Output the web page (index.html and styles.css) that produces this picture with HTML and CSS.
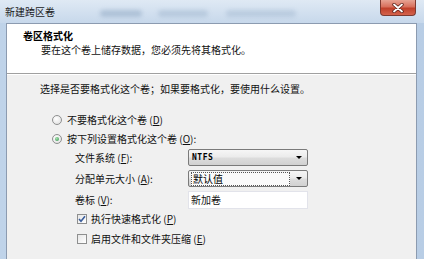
FILE: index.html
```html
<!DOCTYPE html>
<html>
<head>
<meta charset="utf-8">
<title>新建跨区卷</title>
<link rel="stylesheet" href="styles.css">
</head>
<body>
<div class="window">
	<div class="titlebar">
		<span class="title">新建跨区卷</span>
		<span class="blur b1"></span>
		<span class="blur b2"></span>
		<span class="blur b3"></span>
		<button class="close">
			<svg width="14" height="10" viewBox="0 0 14 10">
				<path d="M3 1.5 L11 8.5 M11 1.5 L3 8.5" stroke="#5a2018" stroke-width="3.4" stroke-linecap="round"/>
				<path d="M3 1.5 L11 8.5 M11 1.5 L3 8.5" stroke="#ffffff" stroke-width="1.8" stroke-linecap="round"/>
			</svg>
		</button>
	</div>
	<div class="frame">
		<div class="content">
			<div class="header">
				<div class="h-title">卷区格式化</div>
				<div class="h-sub">要在这个卷上储存数据，您必须先将其格式化。</div>
			</div>
			<div class="body">
				<p class="intro">选择是否要格式化这个卷；如果要格式化，要使用什么设置。</p>

				<div class="option"><span class="radio"></span>不要格式化这个卷 (<u>D</u>)</div>
				<div class="option"><span class="radio on"></span>按下列设置格式化这个卷 (<u>O</u>):</div>

				<div class="form">
					<label>文件系统 (<u>F</u>):</label>
					<div class="combo"><span class="val latin">NTFS</span><span class="arrow"></span></div>

					<label>分配单元大小 (<u>A</u>):</label>
					<div class="combo"><span class="val focus">默认值</span><span class="arrow"></span></div>

					<label>卷标 (<u>V</u>):</label>
					<div class="textbox">新加卷</div>
				</div>

				<div class="check-row"><span class="check on">
					<svg width="8" height="8" viewBox="0 0 8 8"><path d="M1 4 L3 6.3 L7 1.2" fill="none" stroke="#3a5d9c" stroke-width="1.6"/></svg>
				</span>执行快速格式化 (<u>P</u>)</div>
				<div class="check-row"><span class="check"></span>启用文件和文件夹压缩 (<u>E</u>)</div>
			</div>
		</div>
	</div>
</div>
</body>
</html>
```

FILE: styles.css
```css
html, body {
	margin: 0;
	padding: 0;
}

body {
	width: 424px;
	height: 259px;
	overflow: hidden;
	font-family: "Noto Sans CJK SC", "Liberation Sans", sans-serif;
	font-size: 10px;
	line-height: 14px;
	color: #111;
}

u {
	text-decoration: underline;
	text-underline-offset: 1px;
}

.window {
	height: 259px;
	display: flex;
	flex-direction: column;
	background: linear-gradient(to right, #bfd3e9, #c9dbee 40%, #b8cde5);
}

.titlebar {
	position: relative;
	height: 23px;
	flex: none;
	display: flex;
	align-items: flex-start;
	background: linear-gradient(to bottom, #dfe9f4, #c7d8eb);
}

.title {
	padding: 5px 0 0 5px;
	color: #1a1a1a;
}

.blur {
	position: absolute;
	top: 10px;
	height: 7px;
	border-radius: 4px;
	background: #9fb5cd;
	filter: blur(2px);
	opacity: 0.7;
}
.b1 { left: 100px; width: 42px; }
.b2 { left: 158px; width: 50px; opacity: 0.5; }
.b3 { left: 226px; width: 70px; opacity: 0.45; }

.close {
	margin-left: auto;
	margin-right: 8px;
	width: 36px;
	height: 16px;
	padding: 0;
	border: 1px solid #7d3a30;
	border-top: none;
	border-radius: 0 0 4px 4px;
	background: linear-gradient(to bottom, #e7a393 0%, #d8705c 45%, #c0402a 55%, #d4634c 100%);
	display: flex;
	align-items: center;
	justify-content: center;
}

.frame {
	flex: 1;
	padding: 0 7px 0 6px;
	display: flex;
}

.content {
	flex: 1;
	border: 1px solid #8c9bb0;
	border-bottom: none;
	background: #f0f0f0;
	display: flex;
	flex-direction: column;
}

.header {
	height: 49px;
	background: #ffffff;
	border-bottom: 1px solid #a0a0a0;
	box-shadow: 0 1px 0 #ffffff;
	padding-top: 5px;
	box-sizing: border-box;
	height: 50px;
}

.h-title {
	padding-left: 16px;
	font-weight: bold;
	color: #000;
}

.h-sub {
	padding-left: 34px;
}

.body {
	padding: 8px 0 0 0;
}

.intro {
	margin: 0 0 14px 33px;
}

.option {
	height: 19px;
	display: flex;
	align-items: center;
	padding-left: 45px;
}

.radio {
	width: 8px;
	height: 8px;
	border: 1px solid #8e8f8f;
	border-radius: 50%;
	background: radial-gradient(circle at 40% 35%, #ffffff, #dcdcdc);
	margin-right: 5px;
	display: inline-flex;
	align-items: center;
	justify-content: center;
}

.radio.on::after {
	content: "";
	width: 4px;
	height: 4px;
	border-radius: 50%;
	background: radial-gradient(circle at 40% 35%, #a6e2ad, #2b8d49);
}

.form {
	margin: 1px 0 0 68px;
	display: grid;
	grid-template-columns: 113px 120px;
	grid-template-rows: 17px 17px 18px;
	row-gap: 4px;
	align-items: center;
}

.combo {
	height: 17px;
	box-sizing: border-box;
	border: 1px solid #7a7a7a;
	border-radius: 2px;
	background: linear-gradient(to bottom, #f6f6f6 0%, #ebebeb 48%, #dddddd 52%, #d1d1d1 100%);
	display: flex;
	align-items: center;
	padding: 0 5px 0 2px;
}

.val {
	flex: 1;
	height: 12px;
	line-height: 12px;
	padding-left: 1px;
	color: #000;
}

.latin {
	font-family: "DejaVu Sans Mono", monospace;
	font-size: 8px;
	font-weight: bold;
	letter-spacing: 0.5px;
}

.focus {
	border: 1px dotted #555;
	margin-right: 6px;
	background: #fafafa;
}

.arrow {
	width: 0;
	height: 0;
	border-left: 3px solid transparent;
	border-right: 3px solid transparent;
	border-top: 3px solid #000;
}

.textbox {
	height: 18px;
	box-sizing: border-box;
	background: #ffffff;
	border: 1px solid #e2e3ea;
	padding-left: 2px;
	line-height: 16px;
}

.check-row {
	height: 20px;
	display: flex;
	align-items: center;
	padding-left: 70px;
}

.check {
	width: 8px;
	height: 8px;
	border: 1px solid #8e8f8f;
	background: linear-gradient(135deg, #e6e6e6, #ffffff);
	margin-right: 4px;
	display: inline-flex;
	align-items: center;
	justify-content: center;
}
```
